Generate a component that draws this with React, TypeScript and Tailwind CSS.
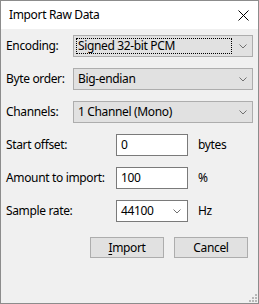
import React from "react";

function Chevron() {
  return (
    <svg width="8" height="5" viewBox="0 0 8 5" className="shrink-0">
      <path d="M0.5 0.5 L4 4 L7.5 0.5" fill="none" stroke="#707070" strokeWidth="1" />
    </svg>
  );
}

function Choice({ value, focused }: { value: string; focused?: boolean }) {
  return (
    <div className="flex h-[22px] w-[180px] items-center border border-[#adadad] bg-[#e1e1e1] pl-[2px] pr-[5px]">
      <div
        className={
          focused
            ? "flex h-[16px] flex-1 items-center border border-dotted border-black pl-[1px]"
            : "flex h-[16px] flex-1 items-center pl-[2px]"
        }
      >
        {value}
      </div>
      <div className="ml-[7px]">
        <Chevron />
      </div>
    </div>
  );
}

function Field({ value, unit, combo }: { value: string; unit: string; combo?: boolean }) {
  return (
    <div className="flex items-center">
      <div className="flex h-[22px] w-[72px] items-center border border-[#7a7a7a] bg-white pl-[4px] pr-[6px]">
        <span className="flex-1">{value}</span>
        {combo && <Chevron />}
      </div>
      <span className="ml-[10px]">{unit}</span>
    </div>
  );
}

export default function App() {
  const choices = [
    { label: "Encoding:", value: "Signed 32-bit PCM", focused: true },
    { label: "Byte order:", value: "Big-endian" },
    { label: "Channels:", value: "1 Channel (Mono)" },
  ];
  const fields = [
    { label: "Start offset:", value: "0", unit: "bytes" },
    { label: "Amount to import:", value: "100", unit: "%" },
    { label: "Sample rate:", value: "44100", unit: "Hz", combo: true },
  ];

  return (
    <div
      className="flex h-[304px] w-[259px] flex-col border border-[#8c8c8c] bg-[#f0f0f0] text-[12px] tracking-[-0.35px] text-black"
      style={{ fontFamily: '"Noto Sans", "Liberation Sans", sans-serif' }}
    >
      <div className="flex h-[28px] items-center justify-between bg-white pl-[8px] pr-[9px]">
        <span>Import Raw Data</span>
        <svg width="11" height="11" viewBox="0 0 11 11">
          <path d="M0.5 0.5 L10.5 10.5 M10.5 0.5 L0.5 10.5" stroke="#000" strokeWidth="1" />
        </svg>
      </div>

      <div className="flex flex-1 flex-col pl-[5px] pt-[6px]">
        <div className="flex flex-col gap-[11px]">
          {choices.map((c) => (
            <div key={c.label} className="flex items-center">
              <span className="w-[67px]">{c.label}</span>
              <Choice value={c.value} focused={c.focused} />
            </div>
          ))}
          {fields.map((f) => (
            <div key={f.label} className="flex items-center">
              <span className="w-[110px]">{f.label}</span>
              <Field value={f.value} unit={f.unit} combo={f.combo} />
            </div>
          ))}
        </div>

        <div className="mt-[15px] flex gap-[10px] pl-[84px]">
          <button className="h-[21px] w-[74px] border border-[#adadad] bg-[#e1e1e1]">
            <span className="underline underline-offset-2">I</span>mport
          </button>
          <button className="h-[21px] w-[74px] border border-[#adadad] bg-[#e1e1e1]">Cancel</button>
        </div>

        <div className="mt-auto flex justify-end pb-[1px] pr-[1px]">
          <svg width="8" height="8" viewBox="0 0 8 8">
            <g fill="#b8b8b8">
              <rect x="6" y="0" width="2" height="2" />
              <rect x="3" y="3" width="2" height="2" />
              <rect x="6" y="3" width="2" height="2" />
              <rect x="0" y="6" width="2" height="2" />
              <rect x="3" y="6" width="2" height="2" />
              <rect x="6" y="6" width="2" height="2" />
            </g>
          </svg>
        </div>
      </div>
    </div>
  );
}
